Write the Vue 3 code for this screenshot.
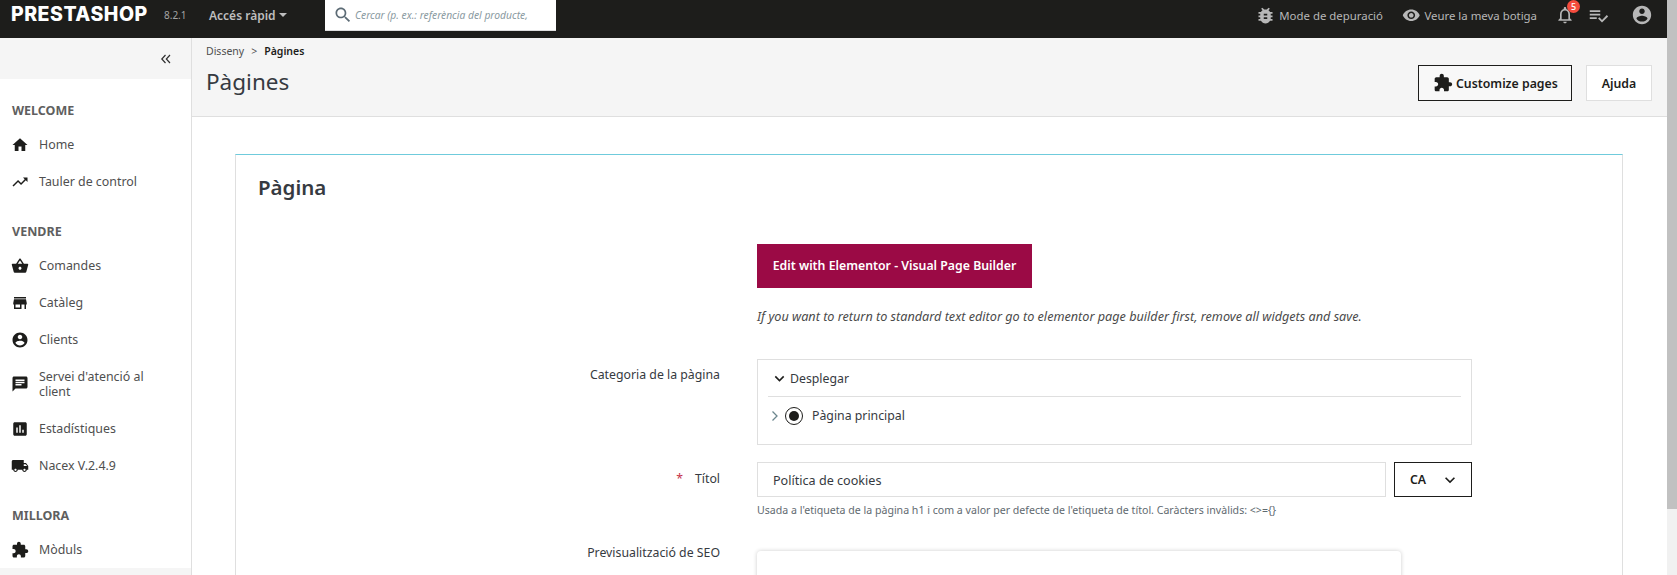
<script setup>
const sections = [
  { title: 'WELCOME', items: [
    { label: 'Home', icon: 'M10 20v-6h4v6h5v-8h3L12 3 2 12h3v8z' },
    { label: 'Tauler de control', icon: 'M16 6l2.29 2.29-4.88 4.88-4-4L2 16.59 3.41 18l6-6 4 4 6.3-6.29L22 12V6z' },
  ]},
  { title: 'VENDRE', items: [
    { label: 'Comandes', icon: 'M17.21 9l-4.38-6.56c-.19-.28-.51-.42-.83-.42-.32 0-.64.14-.83.43L6.79 9H2c-.55 0-1 .45-1 1 0 .09.01.18.04.27l2.54 9.27c.23.84 1 1.46 1.92 1.46h13c.92 0 1.69-.62 1.93-1.46l2.54-9.27L23 10c0-.55-.45-1-1-1h-4.79zM9 9l3-4.4L15 9H9zm3 8c-1.1 0-2-.9-2-2s.9-2 2-2 2 .9 2 2-.9 2-2 2z' },
    { label: 'Catàleg', icon: 'M20 4H4v2h16V4zm1 10v-2l-1-5H4l-1 5v2h1v6h10v-6h4v6h2v-6h1zm-9 4H6v-4h6v4z' },
    { label: 'Clients', icon: 'M12 2C6.48 2 2 6.48 2 12s4.48 10 10 10 10-4.48 10-10S17.52 2 12 2zm0 3c1.66 0 3 1.34 3 3s-1.34 3-3 3-3-1.34-3-3 1.34-3 3-3zm0 14.2c-2.5 0-4.71-1.28-6-3.22.03-1.99 4-3.08 6-3.08 1.99 0 5.97 1.09 6 3.08-1.29 1.94-3.5 3.22-6 3.22z' },
    { label: "Servei d'atenció al client", icon: 'M20 2H4c-1.1 0-1.99.9-1.99 2L2 22l4-4h14c1.1 0 2-.9 2-2V4c0-1.1-.9-2-2-2zM6 9h12v2H6V9zm8 5H6v-2h8v2zm4-6H6V6h12v2z' },
    { label: 'Estadístiques', icon: 'M19 3H5c-1.1 0-2 .9-2 2v14c0 1.1.9 2 2 2h14c1.1 0 2-.9 2-2V5c0-1.1-.9-2-2-2zM9 17H7v-7h2v7zm4 0h-2V7h2v10zm4 0h-2v-4h2v4z' },
    { label: 'Nacex V.2.4.9', icon: 'M20 8h-3V4H3c-1.1 0-2 .9-2 2v11h2c0 1.66 1.34 3 3 3s3-1.34 3-3h6c0 1.66 1.34 3 3 3s3-1.34 3-3h2v-5l-3-4zM6 18.5c-.83 0-1.5-.67-1.5-1.5s.67-1.5 1.5-1.5 1.5.67 1.5 1.5-.67 1.5-1.5 1.5zm13.5-9l1.96 2.5H17V9.5h2.5zm-1.5 9c-.83 0-1.5-.67-1.5-1.5s.67-1.5 1.5-1.5 1.5.67 1.5 1.5-.67 1.5-1.5 1.5z' },
  ]},
  { title: 'MILLORA', items: [
    { label: 'Mòduls', icon: 'M20.5 11H19V7c0-1.1-.9-2-2-2h-4V3.5C13 2.12 11.88 1 10.5 1S8 2.12 8 3.5V5H4c-1.1 0-1.99.9-1.99 2v3.8H3.5c1.49 0 2.7 1.21 2.7 2.7s-1.21 2.7-2.7 2.7H2V20c0 1.1.9 2 2 2h3.8v-1.5c0-1.49 1.21-2.7 2.7-2.7 1.49 0 2.7 1.21 2.7 2.7V22H17c1.1 0 2-.9 2-2v-4h1.5c1.38 0 2.5-1.12 2.5-2.5S21.88 11 20.5 11z' },
  ]},
]
const icons = {
  search: 'M15.5 14h-.79l-.28-.27C15.41 12.59 16 11.11 16 9.5 16 5.91 13.09 3 9.5 3S3 5.91 3 9.5 5.91 16 9.5 16c1.61 0 3.09-.59 4.23-1.57l.27.28v.79l5 4.99L20.49 19l-4.99-5zm-6 0C7.01 14 5 11.99 5 9.5S7.01 5 9.5 5 14 7.01 14 9.5 11.99 14 9.5 14z',
  bug: 'M20 8h-2.81c-.45-.78-1.07-1.45-1.82-1.96L17 4.41 15.59 3l-2.17 2.17C12.96 5.06 12.49 5 12 5c-.49 0-.96.06-1.41.17L8.41 3 7 4.41l1.62 1.63C7.88 6.55 7.26 7.22 6.81 8H4v2h2.09c-.05.33-.09.66-.09 1v1H4v2h2v1c0 .34.04.67.09 1H4v2h2.81c1.04 1.79 2.97 3 5.19 3s4.15-1.21 5.19-3H20v-2h-2.09c.05-.33.09-.66.09-1v-1h2v-2h-2v-1c0-.34-.04-.67-.09-1H20V8zm-6 8h-4v-2h4v2zm0-4h-4v-2h4v2z',
  eye: 'M12 4.5C7 4.5 2.73 7.61 1 12c1.73 4.39 6 7.5 11 7.5s9.27-3.11 11-7.5c-1.73-4.39-6-7.5-11-7.5zM12 17c-2.76 0-5-2.24-5-5s2.24-5 5-5 5 2.24 5 5-2.24 5-5 5zm0-8c-1.66 0-3 1.34-3 3s1.34 3 3 3 3-1.34 3-3-1.34-3-3-3z',
  bell: 'M12 22c1.1 0 2-.9 2-2h-4c0 1.1.9 2 2 2zm6-6v-5c0-3.07-1.63-5.64-4.5-6.32V4c0-.83-.67-1.5-1.5-1.5s-1.5.67-1.5 1.5v.68C7.64 5.36 6 7.92 6 11v5l-2 2v1h16v-1l-2-2zm-2 1H8v-6c0-2.48 1.51-4.5 4-4.5s4 2.02 4 4.5v6z',
  check: 'M14 10H2v2h12v-2zm0-4H2v2h12V6zM2 16h8v-2H2v2zm19.5-4.5L23 13l-6.99 7-4.51-4.5L13 14l3.01 3 5.49-5.5z',
  user: 'M12 2C6.48 2 2 6.48 2 12s4.48 10 10 10 10-4.48 10-10S17.52 2 12 2zm0 3c1.66 0 3 1.34 3 3s-1.34 3-3 3-3-1.34-3-3 1.34-3 3-3zm0 14.2c-2.5 0-4.71-1.28-6-3.22.03-1.99 4-3.08 6-3.08 1.99 0 5.97 1.09 6 3.08-1.29 1.94-3.5 3.22-6 3.22z',
  puzzle: 'M20.5 11H19V7c0-1.1-.9-2-2-2h-4V3.5C13 2.12 11.88 1 10.5 1S8 2.12 8 3.5V5H4c-1.1 0-1.99.9-1.99 2v3.8H3.5c1.49 0 2.7 1.21 2.7 2.7s-1.21 2.7-2.7 2.7H2V20c0 1.1.9 2 2 2h3.8v-1.5c0-1.49 1.21-2.7 2.7-2.7 1.49 0 2.7 1.21 2.7 2.7V22H17c1.1 0 2-.9 2-2v-4h1.5c1.38 0 2.5-1.12 2.5-2.5S21.88 11 20.5 11z',
  down: 'M7.41 8.59L12 13.17l4.59-4.58L18 10l-6 6-6-6z',
}
</script>

<template>
  <div class="shell">
    <div class="page">
      <header class="topbar">
        <span class="logo">PRESTASHOP</span>
        <span class="version">8.2.1</span>
        <span class="quick">Accés ràpid<i class="caret"></i></span>
        <div class="search">
          <svg class="search-ico" viewBox="0 0 24 24"><path :d="icons.search" /></svg>
          <span class="placeholder">Cercar (p. ex.: referència del producte,</span>
        </div>
        <div class="top-right">
          <span class="top-link debug"><svg viewBox="0 0 24 24"><path :d="icons.bug" /></svg>Mode de depuració</span>
          <span class="top-link shop"><svg viewBox="0 0 24 24"><path :d="icons.eye" /></svg>Veure la meva botiga</span>
          <span class="bell"><svg viewBox="0 0 24 24"><path :d="icons.bell" /></svg><b class="badge">5</b></span>
          <svg class="tasks" viewBox="0 0 24 24"><path :d="icons.check" /></svg>
          <svg class="account" viewBox="0 0 24 24"><path :d="icons.user" /></svg>
        </div>
      </header>
      <div class="body">
        <aside class="sidebar">
          <div class="collapse">
            <svg viewBox="0 0 12 12"><path d="M5.5 2 1.8 6l3.7 4M10 2 6.300 6l3.700 4" /></svg>
          </div>
          <nav class="nav">
            <section v-for="s in sections" :key="s.title" class="nav-section">
              <h3>{{ s.title }}</h3>
              <a v-for="it in s.items" :key="it.label" class="nav-item">
                <svg viewBox="0 0 24 24"><path :d="it.icon" /></svg>
                <span>{{ it.label }}</span>
              </a>
            </section>
          </nav>
          <div class="nav-next"></div>
        </aside>
        <main class="main">
          <div class="head">
            <div class="head-left">
              <div class="crumbs"><span>Disseny</span><span class="sep">&gt;</span><b>Pàgines</b></div>
              <h1>Pàgines</h1>
            </div>
            <div class="head-actions">
              <button class="btn btn-dark"><svg viewBox="0 0 24 24"><path :d="icons.puzzle" /></svg>Customize pages</button>
              <button class="btn btn-help">Ajuda</button>
            </div>
          </div>
          <div class="content">
            <div class="card">
              <h2>Pàgina</h2>
              <div class="form">
                <div></div>
                <div class="elementor">
                  <button class="btn-elementor">Edit with Elementor - Visual Page Builder</button>
                  <p>If you want to return to standard text editor go to elementor page builder first, remove all widgets and save.</p>
                </div>

                <label class="cat-label">Categoria de la pàgina</label>
                <div class="tree">
                  <div class="tree-head">
                    <svg viewBox="0 0 24 24"><path :d="icons.down" /></svg>
                    <span>Desplegar</span>
                  </div>
                  <div class="tree-row">
                    <svg class="tree-arrow" viewBox="0 0 8 12"><path d="M1.500 1.500 6 6l-4.500 4.500" /></svg>
                    <span class="radio"></span>
                    <span>Pàgina principal</span>
                  </div>
                </div>

                <label class="title-label"><em>*</em>Títol</label>
                <div>
                  <div class="title-row">
                    <div class="input">Política de cookies</div>
                    <div class="lang">CA<svg viewBox="0 0 24 24"><path :d="icons.down" /></svg></div>
                  </div>
                  <small>Usada a l'etiqueta de la pàgina h1 i com a valor per defecte de l'etiqueta de títol. Caràcters invàlids: &lt;&gt;={}</small>
                </div>

                <label class="seo-label">Previsualització de SEO</label>
                <div class="seo"></div>
              </div>
            </div>
          </div>
        </main>
      </div>
    </div>
    <div class="scrollbar"><div class="thumb"></div></div>
  </div>
</template>

<style>
html, body { margin: 0; overflow: hidden; }
</style>

<style scoped>
.shell { display: flex; height: 575px; overflow: hidden; font-family: "Noto Sans", sans-serif; color: #363a41; background: #fff; }
.page { flex: 1; min-width: 0; display: flex; flex-direction: column; }
.scrollbar { width: 10px; background: #f1f1f1; flex: none; }
.thumb { height: 509px; background: #c1c1c1; }
svg { fill: currentColor; flex: none; display: block; }

.topbar { height: 38px; box-sizing: border-box; padding-bottom: 8px; flex: none; background: #1d1d1b; display: flex; align-items: center; position: relative; }
.logo { margin-left: 11px; width: 142px; font: 800 19.5px/1 Inter, sans-serif; color: #fff; letter-spacing: 0.5px; white-space: nowrap; }
.version { margin-left: 11px; font: 10px "Noto Sans", sans-serif; color: #a4a4a4; width: 45px; }
.quick { font-size: 12px; font-weight: 600; color: #bebebe; display: flex; align-items: center; width: 116px; }
.caret { margin-left: 3px; border: 4px solid transparent; border-top-color: #bebebe; border-bottom: 0; }
.search { align-self: flex-start; width: 231px; height: 30px; background: #fff; border-bottom: 1px solid #dfdfdf; display: flex; align-items: center; }
.search-ico { width: 20px; height: 20px; margin-left: 8px; color: #5c6b75; }
.placeholder { margin-left: 2px; font-size: 10.3px; font-style: italic; color: #8a9aa1; white-space: nowrap; }
.top-right { margin-left: auto; display: flex; align-items: center; color: #b7b7b7; }
.top-link { display: flex; align-items: center; font-size: 11.4px; white-space: nowrap; }
.debug svg { width: 21px; height: 21px; margin-right: 3px; }
.shop { margin-left: 19px; }
.shop svg { width: 18.500px; height: 18.500px; margin-right: 4px; }
.bell { margin-left: 18px; position: relative; }
.bell svg { width: 20px; height: 20px; }
.badge { position: absolute; top: -5px; right: -5px; width: 13px; height: 13px; border-radius: 50%; background: #f54c3e; color: #fff; font: 500 9px/13px "Noto Sans", sans-serif; text-align: center; }
.tasks { width: 21px; height: 21px; margin-left: 13px; }
.account { width: 22px; height: 22px; margin-left: 22px; margin-right: 14px; }

.body { flex: 1; display: flex; min-height: 0; }
.sidebar { width: 191px; flex: none; border-right: 1px solid #dfdfdf; display: flex; flex-direction: column; background: #fff; overflow: hidden; }
.collapse { height: 41px; flex: none; background: #f5f5f5; display: flex; justify-content: flex-end; align-items: center; }
.collapse svg { width: 12px; height: 12px; margin-right: 19px; fill: none; stroke: #2f2f2f; stroke-width: 1.200; }
.nav { padding-top: 22px; }
.nav-section { margin-bottom: 22px; }
.nav-section:last-child { margin-bottom: 0; }
.nav-section h3 { margin: 0 0 6px 12px; padding-top: 1px; font-size: 12.5px; line-height: 18px; font-weight: 700; color: #5f5f5f; }
.nav-item { display: flex; align-items: center; padding: 0 26px 0 11px; color: #4f4f4f; font-size: 12.4px; line-height: 15px; }
.nav-item span { padding: 11px 0; }
.nav-item svg { width: 18px; height: 18px; margin-right: 10px; color: #1d1d1b; }
.nav-next { flex: 1; background: #f5f5f5; }

.main { flex: 1; min-width: 0; display: flex; flex-direction: column; }
.head { height: 79px; flex: none; box-sizing: border-box; background: #f5f5f5; border-bottom: 1px solid #dfdfdf; display: flex; justify-content: space-between; padding: 0 15px 0 14px; }
.crumbs { margin-top: 6px; font-size: 10.500px; line-height: 15px; color: #4f4f4f; display: flex; gap: 7px; }
.crumbs b { font-weight: 600; color: #1d1d1b; }
h1 { margin: 7px 0 0; font-size: 22.500px; line-height: 32px; font-weight: 400; color: #363a41; }
.head-actions { display: flex; gap: 14px; padding-top: 27px; align-items: flex-start; }
.btn { box-sizing: border-box; height: 36px; display: flex; align-items: center; font-family: inherit; font-size: 12.300px; font-weight: 600; color: #1d1d1b; background: #fff; }
.btn-dark { width: 154px; border: 1px solid #1d1d1b; padding: 0 0 0 14px; background: #f8f8f8; }
.btn-dark svg { width: 20px; height: 20px; margin-right: 3px; }
.btn-help { width: 66px; border: 1px solid #dfdfdf; justify-content: center; padding: 0; }

.content { flex: 1; padding: 37px 44px 0 43px; min-height: 0; overflow: hidden; }
.card { box-sizing: border-box; height: 500px; border: 1px solid #dfdfdf; border-top-color: #6fcbdc; padding: 19px 22px 0; }
h2 { margin: 0; font-size: 20.500px; line-height: 26px; font-weight: 600; color: #363a41; }
.form { display: grid; grid-template-columns: 462px 715px; column-gap: 37px; margin-top: 44px; font-size: 12.300px; color: #363a41; }
label { text-align: right; line-height: 18px; }
.elementor { height: 115px; }
.btn-elementor { display: block; width: 275px; height: 44px; padding: 0 0 2px; background: #9b0a45; color: #fff; border: 0; font-family: inherit; font-size: 12.300px; font-weight: 600; }
.elementor p { margin: 19px 0 0; font-size: 12.650px; line-height: 18px; font-style: italic; color: #4a4a4a; white-space: nowrap; }
.tree { box-sizing: border-box; height: 86px; border: 1px solid #dfdfdf; padding: 0 10px; }
.cat-label { margin-top: 7px; }
.tree-head { height: 37px; box-sizing: border-box; border-bottom: 1px solid #dfdfdf; display: flex; align-items: center; padding-left: 2px; gap: 1px; }
.tree-head svg { width: 19px; height: 19px; color: #1d1d1b; }
.tree-row { display: flex; align-items: center; height: 37px; padding-left: 3px; }
.tree-arrow { width: 8px; height: 12px; fill: none; stroke: #6c868e; stroke-width: 1.300; margin-right: 6px; }
.radio { width: 18px; height: 18px; box-sizing: border-box; border-radius: 50%; border: 1px solid #1d1d1b; margin-right: 9px; display: flex; align-items: center; justify-content: center; }
.radio::after { content: ""; width: 10px; height: 10px; border-radius: 50%; background: #1d1d1b; }
.title-label { margin-top: 17px; padding-top: 8px; }
.title-label em { color: #c5324a; font-style: normal; margin-right: 12px; }
.title-row { display: flex; gap: 8px; margin-top: 17px; height: 35px; }
.input { flex: 1; box-sizing: border-box; border: 1px solid #dfdfdf; padding: 1px 0 0 15px; display: flex; align-items: center; font-size: 12.600px; }
.lang { width: 78px; box-sizing: border-box; border: 1px solid #1d1d1b; display: flex; align-items: center; padding-left: 15px; font-weight: 600; color: #1d1d1b; gap: 14px; }
.lang svg { width: 20px; height: 20px; }
small { display: block; margin-top: 6px; font-size: 10.600px; line-height: 14px; color: #5f6a70; white-space: nowrap; }
.seo-label { margin-top: 27px; }
.seo { margin-top: 34px; width: 644px; height: 80px; background: #fff; border-radius: 4px; box-shadow: 0 0 4px rgba(0, 0, 0, 0.2); }
</style>
